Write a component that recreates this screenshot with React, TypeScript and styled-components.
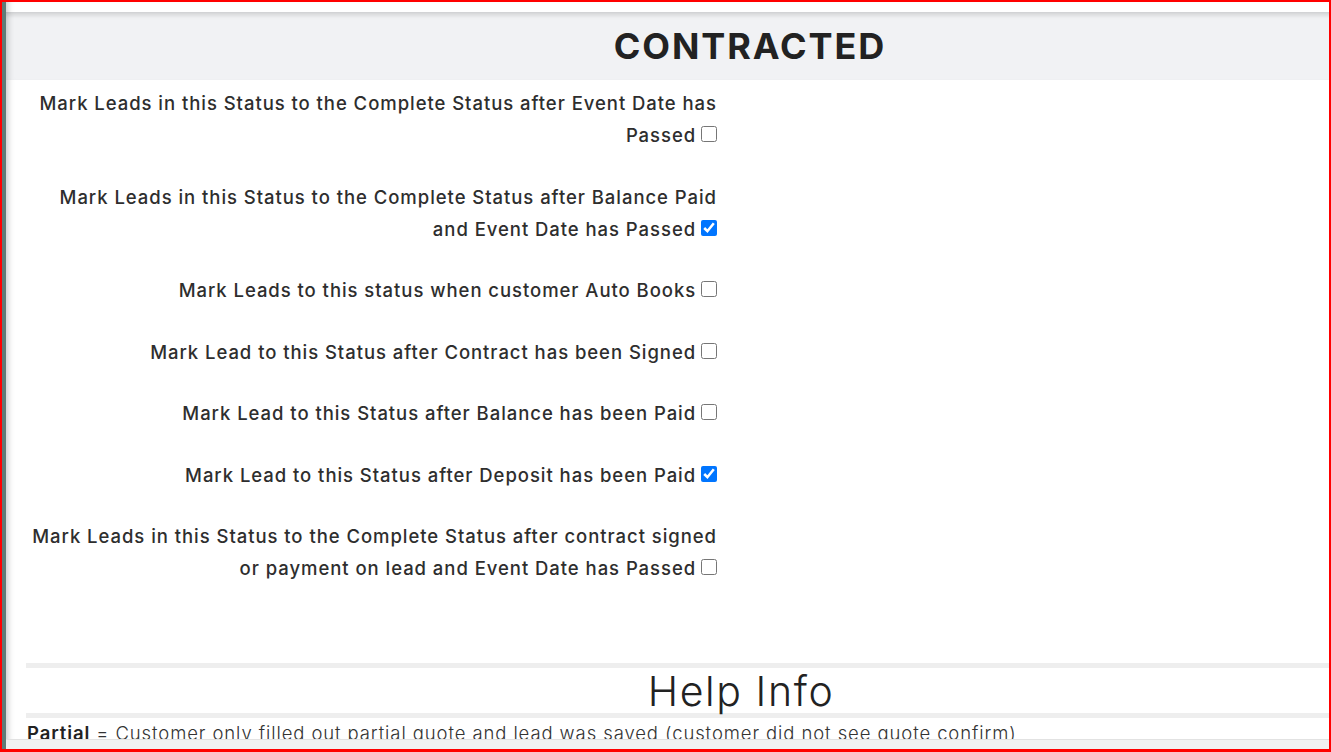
import React from "react";
import styled, { createGlobalStyle } from "styled-components";

const Global = createGlobalStyle`
  html, body { margin: 0; padding: 0; overflow: hidden; background: #fff; }
  * { box-sizing: border-box; }
`;

const Frame = styled.div`
  width: 1331px;
  height: 752px;
  border: 2px solid #ff0000;
  border-bottom-width: 3px;
  display: flex;
  overflow: hidden;
  font-family: Inter, "DejaVu Sans", sans-serif;
  color: #2b2b2b;
`;

const Rail = styled.div`
  width: 4px;
  flex: none;
  background: #5f7b77;
`;

const Main = styled.div`
  flex: 1;
  min-width: 0;
  display: flex;
  flex-direction: column;
  box-shadow: inset 7px 0 6px -5px rgba(0, 0, 0, 0.22);
`;

const Viewport = styled.div`
  flex: 1;
  min-height: 0;
  overflow: hidden;
`;

const Page = styled.div`
  width: 1488px;
  padding-top: 10px;
`;

const Header = styled.div`
  height: 68px;
  background: #f1f2f4;
  display: flex;
  align-items: center;
  justify-content: center;
  box-shadow: inset 7px 0 6px -5px rgba(0, 0, 0, 0.2),
    inset 0 6px 5px -3px rgba(0, 0, 0, 0.14);
`;

const Title = styled.h1`
  margin: 0;
  font-size: 36px;
  font-weight: 700;
  letter-spacing: 1.9px;
  color: #222;
  line-height: 1;
`;

const Form = styled.div`
  padding: 7px 0 0 20px;
  width: 711px;
  display: flex;
  flex-direction: column;
  gap: 29.5px;
`;

const Row = styled.label`
  display: block;
  text-align: right;
  font-size: 18.5px;
  font-weight: 500;
  letter-spacing: 0.95px;
  line-height: 32px;
  color: #2e2e2e;
`;

const Check = styled.input.attrs({ type: "checkbox" })`
  width: 16px;
  height: 16px;
  margin: 0 0 0 -1px;
  vertical-align: 0px;
  accent-color: #0075ff;
`;

const Help = styled.section`
  margin: 79px 38px 0 20px;
`;

const Rule = styled.div`
  height: 5px;
  background: #eeeeee;
`;

const HelpTitle = styled.h2`
  margin: 0;
  height: 45px;
  display: flex;
  align-items: center;
  justify-content: center;
  font-size: 41px;
  font-weight: 300;
  letter-spacing: 1.6px;
  color: #222;
`;

const HelpLine = styled.p`
  margin: 0;
  padding-left: 1px;
  font-size: 18.5px;
  font-weight: 300;
  letter-spacing: 0.9px;
  line-height: 30px;
  color: #333;
  white-space: nowrap;
  b { font-weight: 600; color: #222; }
`;

const Track = styled.div`
  height: 10px;
  flex: none;
  background: #f1f1f1;
  border-top: 1px solid #e2e2e2;
`;

const rows: { lines: string[]; checked: boolean }[] = [
  {
    lines: [
      "Mark Leads in this Status to the Complete Status after Event Date has",
      "Passed",
    ],
    checked: false,
  },
  {
    lines: [
      "Mark Leads in this Status to the Complete Status after Balance Paid",
      "and Event Date has Passed",
    ],
    checked: true,
  },
  { lines: ["Mark Leads to this status when customer Auto Books"], checked: false },
  { lines: ["Mark Lead to this Status after Contract has been Signed"], checked: false },
  { lines: ["Mark Lead to this Status after Balance has been Paid"], checked: false },
  { lines: ["Mark Lead to this Status after Deposit has been Paid"], checked: true },
  {
    lines: [
      "Mark Leads in this Status to the Complete Status after contract signed",
      "or payment on lead and Event Date has Passed",
    ],
    checked: false,
  },
];

export default function App() {
  return (
    <>
      <Global />
      <Frame>
        <Rail />
        <Main>
          <Viewport>
            <Page>
              <Header>
                <Title>CONTRACTED</Title>
              </Header>
              <Form>
                {rows.map((r, i) => (
                  <Row key={i}>
                    {r.lines.map((l, j) => (
                      <React.Fragment key={j}>
                        {j > 0 && <br />}
                        {l}
                      </React.Fragment>
                    ))}{" "}
                    <Check defaultChecked={r.checked} />
                  </Row>
                ))}
              </Form>
              <Help>
                <Rule />
                <HelpTitle>Help Info</HelpTitle>
                <Rule />
                <HelpLine>
                  <b>Partial</b> = Customer only filled out partial quote and lead was saved
                  (customer did not see quote confirm)
                </HelpLine>
              </Help>
            </Page>
          </Viewport>
          <Track />
        </Main>
      </Frame>
    </>
  );
}
